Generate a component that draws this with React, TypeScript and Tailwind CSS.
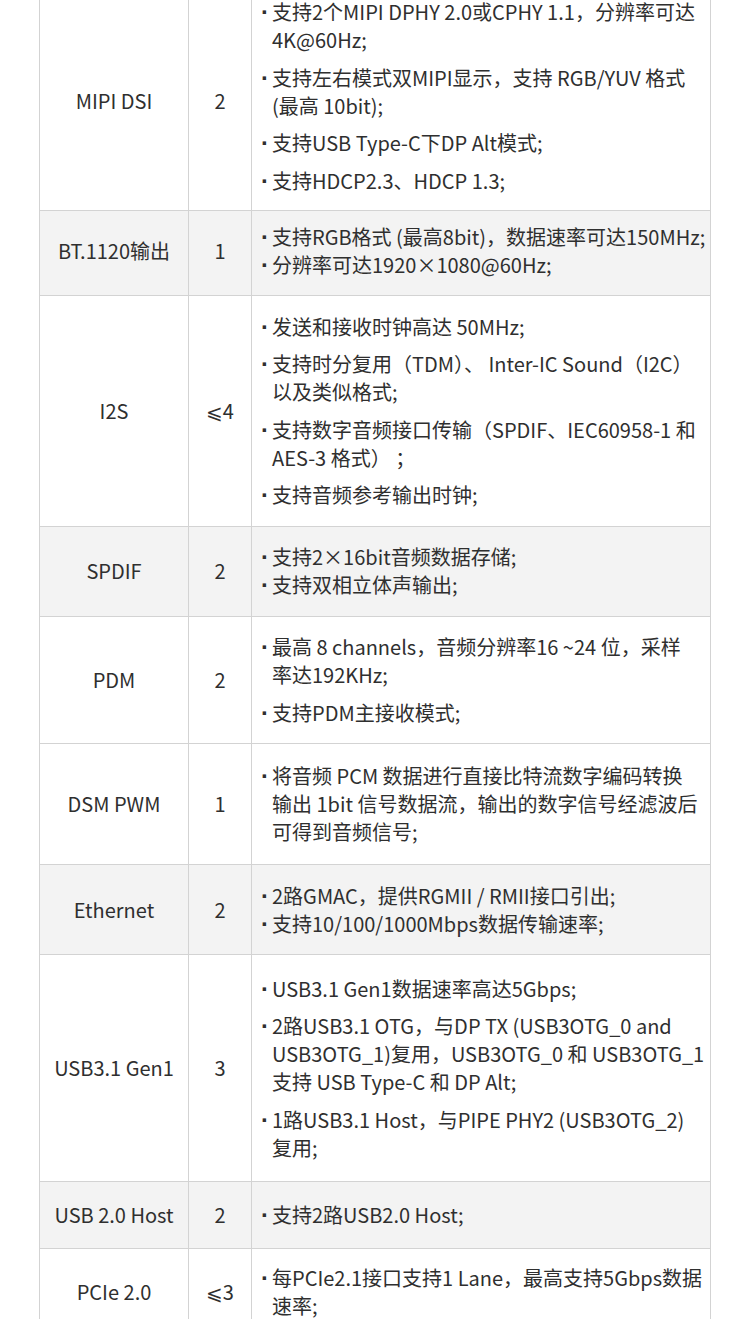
import React from "react";

type Row = {
  name: string;
  n: string;
  gray: boolean;
  h: string;
  spaced: boolean;
  shift?: string;
  content?: string;
  items: string[][];
};

const rows: Row[] = [
  {
    name: "MIPI DSI",
    n: "2",
    gray: false,
    h: "h-[220px]",
    spaced: true,
    content: "justify-start pt-[7px]",
    items: [
      ["支持2个MIPI DPHY 2.0或CPHY 1.1，分辨率可达", "4K@60Hz;"],
      ["支持左右模式双MIPI显示，支持 RGB/YUV 格式", "(最高 10bit);"],
      ["支持USB Type-C下DP Alt模式;"],
      ["支持HDCP2.3、HDCP 1.3;"],
    ],
  },
  {
    name: "BT.1120输出",
    n: "1",
    gray: true,
    h: "h-[85px]",
    spaced: false,
    shift: "pb-[5px]",
    items: [
      ["支持RGB格式 (最高8bit)，数据速率可达150MHz;"],
      ["分辨率可达1920×1080@60Hz;"],
    ],
  },
  {
    name: "I2S",
    n: "⩽4",
    gray: false,
    h: "h-[231px]",
    spaced: true,
    items: [
      ["发送和接收时钟高达 50MHz;"],
      ["支持时分复用（TDM）、\u00a0Inter-IC Sound（I2C）", "以及类似格式;"],
      ["支持数字音频接口传输（SPDIF、IEC60958-1 和", "AES-3 格式）\u00a0；"],
      ["支持音频参考输出时钟;"],
    ],
  },
  {
    name: "SPDIF",
    n: "2",
    gray: true,
    h: "h-[90px]",
    spaced: false,
    shift: "pb-[1px]",
    items: [["支持2×16bit音频数据存储;"], ["支持双相立体声输出;"]],
  },
  {
    name: "PDM",
    n: "2",
    gray: false,
    h: "h-[127px]",
    spaced: true,
    items: [
      ["最高 8 channels，音频分辨率16 ~24 位，采样", "率达192KHz;"],
      ["支持PDM主接收模式;"],
    ],
  },
  {
    name: "DSM PWM",
    n: "1",
    gray: false,
    h: "h-[121px]",
    spaced: true,
    items: [
      [
        "将音频 PCM 数据进行直接比特流数字编码转换",
        "输出 1bit 信号数据流，输出的数字信号经滤波后",
        "可得到音频信号;",
      ],
    ],
  },
  {
    name: "Ethernet",
    n: "2",
    gray: true,
    h: "h-[90px]",
    spaced: false,
    items: [
      ["2路GMAC，提供RGMII / RMII接口引出;"],
      ["支持10/100/1000Mbps数据传输速率;"],
    ],
  },
  {
    name: "USB3.1 Gen1",
    n: "3",
    gray: false,
    h: "h-[227px]",
    spaced: true,
    items: [
      ["USB3.1 Gen1数据速率高达5Gbps;"],
      [
        "2路USB3.1 OTG，与DP TX (USB3OTG_0 and",
        "USB3OTG_1)复用，USB3OTG_0 和 USB3OTG_1",
        "支持 USB Type-C 和 DP Alt;",
      ],
      ["1路USB3.1 Host，与PIPE PHY2 (USB3OTG_2)", "复用;"],
    ],
  },
  {
    name: "USB 2.0 Host",
    n: "2",
    gray: true,
    h: "h-[67px]",
    spaced: false,
    items: [["支持2路USB2.0 Host;"]],
  },
  {
    name: "PCIe 2.0",
    n: "⩽3",
    gray: false,
    h: "h-[87px]",
    spaced: true,
    items: [["每PCIe2.1接口支持1 Lane，最高支持5Gbps数据", "速率;"]],
  },
];

function TableRow({ r }: { r: Row }) {
  const shift = r.shift ?? "";
  return (
    <div
      className={`grid grid-cols-[149px_63px_459px] border-t border-[#d3d3d3] ${
        r.gray ? "bg-[#f3f3f3]" : "bg-white"
      } ${r.h}`}
    >
      <div className={`flex items-center justify-center border-l border-[#d3d3d3] ${shift}`}>
        {r.name}
      </div>
      <div className={`flex items-center justify-center border-l border-[#d3d3d3] ${shift}`}>
        {r.n}
      </div>
      <div
        className={`flex flex-col border-l border-[#d3d3d3] pl-[9px] pr-[4px] ${shift} ${
          r.spaced ? "gap-[9.5px]" : "gap-0"
        } ${r.content ?? "justify-center"}`}
      >
        {r.items.map((lines, i) => (
          <div key={i} className="flex">
            <span className="w-[11px] shrink-0 font-['Liberation_Sans'] text-[24px] font-bold leading-[28px]">
              ·
            </span>
            <span className="whitespace-nowrap">
              {lines.map((l, j) => (
                <React.Fragment key={j}>
                  {j > 0 && <br />}
                  {l}
                </React.Fragment>
              ))}
            </span>
          </div>
        ))}
      </div>
    </div>
  );
}

export default function App() {
  return (
    <div className="h-[1319px] overflow-hidden bg-white font-['Noto_Sans_CJK_SC','DejaVu_Sans',sans-serif] text-[20px] leading-[28px] text-[#2f2f2f]">
      <div className="mx-auto -mt-[10px] w-[672px] border-r border-b border-[#d3d3d3]">
        {rows.map((r, i) => (
          <TableRow key={i} r={r} />
        ))}
      </div>
    </div>
  );
}
